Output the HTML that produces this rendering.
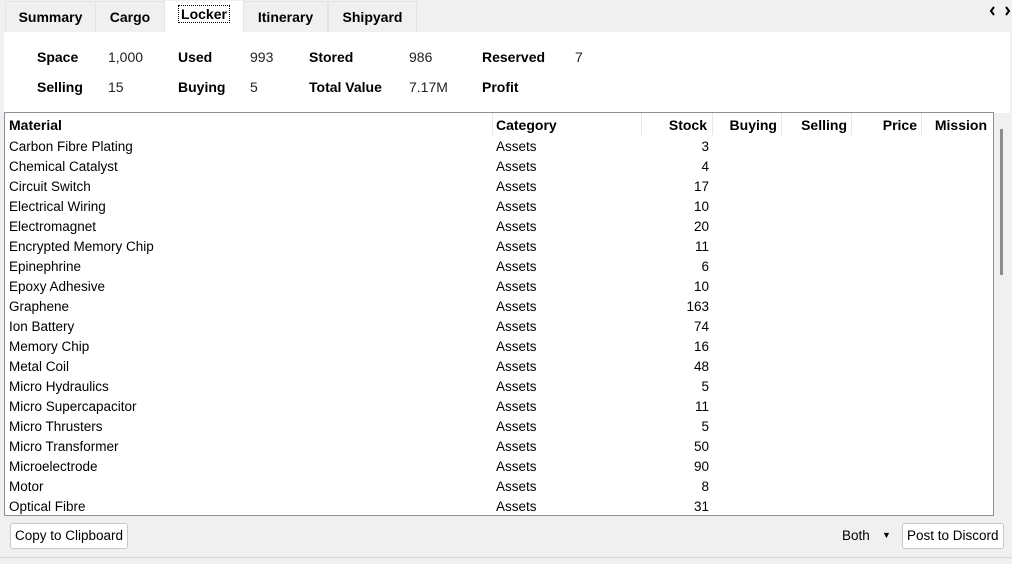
<!DOCTYPE html>
<html><head><meta charset="utf-8"><style>
*{margin:0;padding:0;box-sizing:border-box}
body{width:1012px;height:564px;background:#f0f0f0;font-family:"Liberation Sans",sans-serif;font-size:13px;color:#000;position:relative;overflow:hidden}
.tab{position:absolute;top:1px;height:31px;background:#f0f0f0;border:1px solid #e3e3e3;border-bottom:none;font-weight:bold;font-size:14px;text-align:center;line-height:31px}
.panel{position:absolute;left:4px;top:32px;width:1006px;height:81px;background:#fff}
.b{position:absolute;font-weight:bold;font-size:14px}
.v{position:absolute;font-size:14px;color:#222}
.tbl{position:absolute;left:4px;top:112px;width:990px;height:404px;border:1px solid #8a9099;background:#fff;overflow:hidden}
.h{position:absolute;top:4px;font-weight:bold;font-size:14px}
.sep{position:absolute;top:0;width:1px;height:22px;background:#e8e8e8}
.r{position:absolute;font-size:13.5px;left:0;width:990px;height:20px}
.r span{position:absolute}
.btn{position:absolute;top:523px;height:26px;border:1px solid #c8c8c8;border-radius:3px;background:#fff;font-size:13.5px;line-height:24px;padding:0 4px}
</style></head><body>
<div class="tab" style="left:5px;width:91px">Summary</div>
<div class="tab" style="left:95px;width:70px">Cargo</div>
<div class="tab" style="left:165px;width:78px;background:#fff;border-color:#fff;height:32px"><span style="border:1px dotted #000;padding:0 2px;position:relative;top:-3px">Locker</span></div>
<div class="tab" style="left:243px;width:85px">Itinerary</div>
<div class="tab" style="left:328px;width:89px">Shipyard</div>
<svg style="position:absolute;left:989px;top:5px" width="22" height="12" viewBox="0 0 22 12"><path d="M5 2 L2 6 L5 10 M17 2 L20 6 L17 10" fill="none" stroke="#000" stroke-width="2"/></svg>
<div class="panel"></div>
<div class="b" style="left:37px;top:49px">Space</div><div class="v" style="left:108px;top:49px">1,000</div>
<div class="b" style="left:178px;top:49px">Used</div><div class="v" style="left:250px;top:49px">993</div>
<div class="b" style="left:309px;top:49px">Stored</div><div class="v" style="left:409px;top:49px">986</div>
<div class="b" style="left:482px;top:49px">Reserved</div><div class="v" style="left:575px;top:49px">7</div>
<div class="b" style="left:37px;top:79px">Selling</div><div class="v" style="left:108px;top:79px">15</div>
<div class="b" style="left:178px;top:79px">Buying</div><div class="v" style="left:250px;top:79px">5</div>
<div class="b" style="left:309px;top:79px">Total Value</div><div class="v" style="left:409px;top:79px">7.17M</div>
<div class="b" style="left:482px;top:79px">Profit</div>
<div style="position:absolute;left:994px;top:113px;width:16px;height:403px;background:#f0f0f0"></div>
<div style="position:absolute;left:1000px;top:129px;width:3px;height:146px;background:#8c8c8c"></div>
<div class="tbl">
<div class="h" style="left:4px">Material</div>
<div class="sep" style="left:487px"></div><div class="h" style="left:491px">Category</div>
<div class="sep" style="left:636px"></div><div class="h" style="right:286px">Stock</div>
<div class="sep" style="left:707px"></div><div class="h" style="right:216px">Buying</div>
<div class="sep" style="left:776px"></div><div class="h" style="right:146px">Selling</div>
<div class="sep" style="left:846px"></div><div class="h" style="right:76px">Price</div>
<div class="sep" style="left:916px"></div><div class="h" style="right:6px">Mission</div>
<div id="rows"></div>
</div>
<div class="btn" style="left:10px">Copy to Clipboard</div>
<div style="position:absolute;left:842px;top:528px;font-size:13.5px">Both</div>
<div style="position:absolute;left:882px;top:530px;font-size:9px">▼</div>
<div class="btn" style="left:902px">Post to Discord</div>
<div style="position:absolute;left:0;top:557px;width:1012px;height:1px;background:#d8d8d8"></div>
<script>
var d=[["Carbon Fibre Plating",3],["Chemical Catalyst",4],["Circuit Switch",17],["Electrical Wiring",10],["Electromagnet",20],["Encrypted Memory Chip",11],["Epinephrine",6],["Epoxy Adhesive",10],["Graphene",163],["Ion Battery",74],["Memory Chip",16],["Metal Coil",48],["Micro Hydraulics",5],["Micro Supercapacitor",11],["Micro Thrusters",5],["Micro Transformer",50],["Microelectrode",90],["Motor",8],["Optical Fibre",31]];
var h="";d.forEach(function(r,i){h+='<div class="r" style="top:'+(26+i*20)+'px"><span style="left:4px">'+r[0]+'</span><span style="left:491px">Assets</span><span style="right:286px">'+r[1]+'</span></div>'});
document.getElementById("rows").innerHTML=h;
</script>
</body></html>
